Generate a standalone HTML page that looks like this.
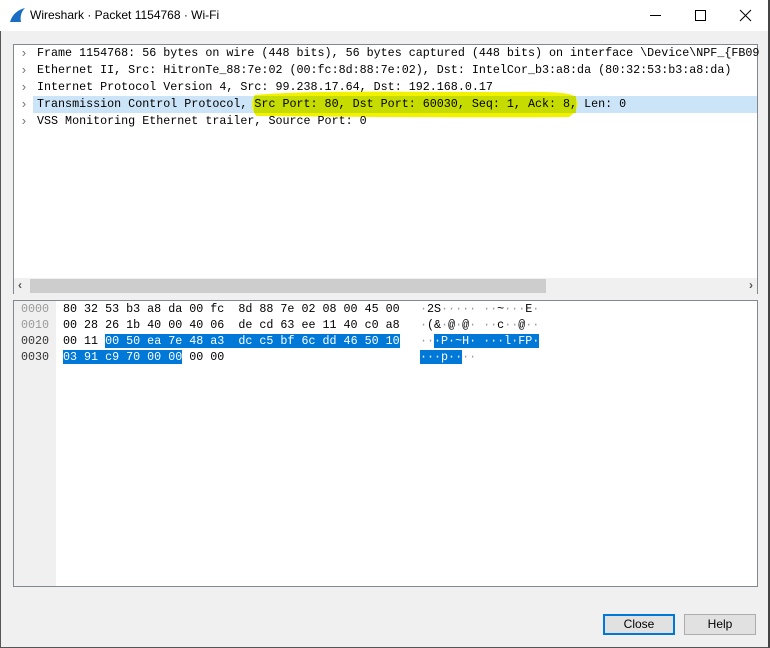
<!DOCTYPE html>
<html><head><meta charset="utf-8"><style>
*{margin:0;padding:0;box-sizing:border-box}
body{width:770px;height:648px;overflow:hidden;background:#f0f0f0;position:relative;font-family:"Liberation Sans",sans-serif}
.win{position:absolute;left:0;top:0;width:770px;height:648px;border:1px solid #555;border-top:none;border-right:2px solid #444}
.title{position:absolute;left:0;top:0;width:768px;height:31px;background:#fff}
.title span{position:absolute;left:30px;top:8px;font-size:12px;color:#000}
.mono{font-family:"Liberation Mono",monospace;font-size:11.7px;white-space:pre}
.box{position:absolute;border:1px solid #828790;background:#fff}
.row{position:absolute;left:0;height:17px;line-height:17px}
.chev{position:absolute;left:6px;color:#777;font-size:13px}
.btn{position:absolute;top:614px;width:72px;height:21px;background:#e1e1e1;border:1px solid #adadad;font-size:12px;text-align:center;line-height:19px}
</style></head><body>
<div class="win"></div>
<div class="title">
<svg style="position:absolute;left:9px;top:7px" width="18" height="16"><path d="M1 15 C3 8 8 3 16 1 C12 5 11 10 12 15 Z" fill="#1a6dc2"/></svg>
<span>Wireshark · Packet 1154768 · Wi-Fi</span>
<svg style="position:absolute;left:650px;top:8px" width="110" height="16" stroke="#000" fill="none" stroke-width="1">
<path d="M0 7.5H11"/><rect x="45.5" y="2.5" width="10" height="10"/><path d="M90 2L101 13M101 2L90 13"/></svg>
</div>
<div class="box" style="left:13px;top:44px;width:745px;height:250px">
<div style="position:absolute;left:19px;top:51px;width:724px;height:17px;background:#cce4f7"></div>
<svg style="position:absolute;left:235px;top:43px" width="340" height="32"><path d="M6 7 C60 2 150 4 250 4 C290 4 315 3 325 8 C331 14 329 23 320 29 C250 30 120 29 8 28 C2 24 2 11 6 7Z" fill="#f2f200"/><rect x="5" y="8" width="322" height="17" fill="#c6dc00"/></svg>
<div class="row mono" style="top:0px;left:0"><span class="chev">›</span><span style="position:absolute;left:23px">Frame 1154768: 56 bytes on wire (448 bits), 56 bytes captured (448 bits) on interface \Device\NPF_{FB09</span></div>
<div class="row mono" style="top:17px"><span class="chev">›</span><span style="position:absolute;left:23px">Ethernet II, Src: HitronTe_88:7e:02 (00:fc:8d:88:7e:02), Dst: IntelCor_b3:a8:da (80:32:53:b3:a8:da)</span></div>
<div class="row mono" style="top:34px"><span class="chev">›</span><span style="position:absolute;left:23px">Internet Protocol Version 4, Src: 99.238.17.64, Dst: 192.168.0.17</span></div>
<div class="row mono" style="top:51px"><span class="chev">›</span><span style="position:absolute;left:23px">Transmission Control Protocol, Src Port: 80, Dst Port: 60030, Seq: 1, Ack: 8, Len: 0</span></div>
<div class="row mono" style="top:68px"><span class="chev">›</span><span style="position:absolute;left:23px">VSS Monitoring Ethernet trailer, Source Port: 0</span></div>
<div style="position:absolute;left:0;top:233px;width:743px;height:16px;background:#f0f0f0">
<div style="position:absolute;left:16px;top:1px;width:516px;height:14px;background:#cdcdcd"></div>
<span style="position:absolute;left:4px;top:0;font-size:12px;color:#555;font-weight:bold">‹</span>
<span style="position:absolute;right:4px;top:0;font-size:12px;color:#555;font-weight:bold">›</span>
</div>
</div>
<div class="box" style="left:13px;top:300px;width:745px;height:287px">
<div style="position:absolute;left:0;top:0;width:42px;height:285px;background:#f0f0f0"></div>
<div class="mono" style="position:absolute;left:7px;top:0;line-height:16px;color:#999">0000
0010
<span style="color:#333">0020</span>
<span style="color:#333">0030</span></div>
<div class="mono" style="position:absolute;left:49px;top:0;line-height:16px">80 32 53 b3 a8 da 00 fc  8d 88 7e 02 08 00 45 00
00 28 26 1b 40 00 40 06  de cd 63 ee 11 40 c0 a8
00 11 <span style="background:#0078d7;color:#fff">00 50 ea 7e 48 a3  dc c5 bf 6c dd 46 50 10</span>
<span style="background:#0078d7;color:#fff">03 91 c9 70 00 00</span> 00 00</div>
<div class="mono" style="position:absolute;left:406px;top:0;line-height:16px"><span style="color:#999">·</span>2S<span style="color:#999">····· ··</span>~<span style="color:#999">···</span>E<span style="color:#999">·</span>
<span style="color:#999">·</span>(&amp;<span style="color:#999">·</span>@<span style="color:#999">·</span>@<span style="color:#999">· ··</span>c<span style="color:#999">··</span>@<span style="color:#999">··</span>
<span style="color:#999">··</span><span style="background:#0078d7;color:#fff">·P·~H· ···l·FP·</span>
<span style="background:#0078d7;color:#fff">···p··</span><span style="color:#999">··</span></div>
</div>
<div class="btn" style="left:603px;border:2px solid #0078d7;line-height:17px">Close</div>
<div class="btn" style="left:684px">Help</div>
</body></html>
